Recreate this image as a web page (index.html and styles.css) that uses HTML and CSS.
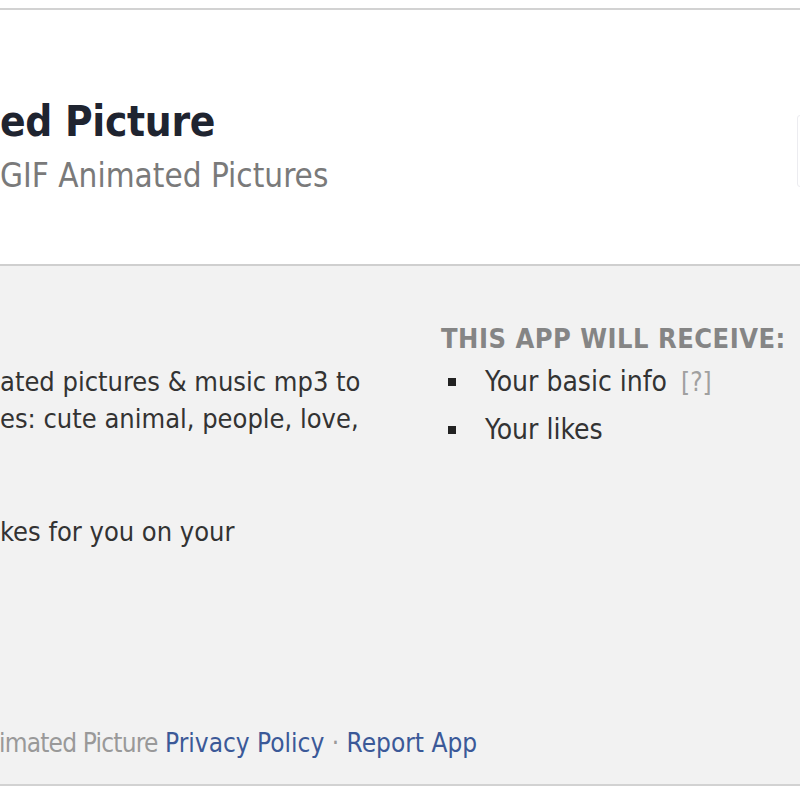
FILE: index.html
```html
<!DOCTYPE html>
<html lang="en">
<head>
<meta charset="utf-8">
<title>GIF Animated Picture</title>
<link rel="stylesheet" href="styles.css">
</head>
<body>
<div class="dialog">
  <header class="head">
    <div class="titles">
      <h1 class="app-name">ed Picture</h1>
      <p class="app-sub">GIF Animated Pictures</p>
    </div>
    <div class="head-btn"></div>
  </header>
  <section class="main">
    <div class="cols">
      <div class="desc">
        <p class="para">ated pictures &amp; music mp3 to<br>es: cute animal, people, love,</p>
        <p class="para para-2">kes for you on your</p>
      </div>
      <div class="perms">
        <h2 class="perms-title">THIS APP WILL RECEIVE:</h2>
        <ul class="perms-list">
          <li>Your basic info <span class="help">[?]</span></li>
          <li>Your likes</li>
        </ul>
      </div>
    </div>
    <footer class="foot">
      <span class="muted">imated Picture</span> <a class="link" href="#">Privacy Policy</a> <span class="dot">·</span> <a class="link" href="#">Report App</a>
    </footer>
  </section>
</div>
</body>
</html>
```
FILE: styles.css
```css
html, body {
  margin: 0;
  padding: 0;
  background: #ffffff;
  overflow: hidden;
}
body {
  font-family: "DejaVu Sans Condensed", "DejaVu Sans", sans-serif;
  color: #333333;
}
.dialog {
  margin-top: 8px;
  border-top: 2px solid #d2d2d2;
  border-bottom: 2px solid #d2d2d2;
}
.head {
  height: 256px;
  background: #ffffff;
  border-bottom: 2px solid #cfcfcf;
  display: flex;
  box-sizing: border-box;
}
.titles {
  flex: 1;
  padding-top: 84px;
}
.app-name {
  margin: 0;
  font-size: 42px;
  line-height: 56px;
  font-weight: bold;
  letter-spacing: -0.3px;
  color: #1f2430;
}
.app-sub {
  margin: 4px 0 0;
  font-size: 33px;
  line-height: 44px;
  color: #7a7a7a;
}
.head-btn {
  width: 20px;
  margin-right: -19px;
  margin-top: 105px;
  height: 70px;
  border: 1px solid #ececf0;
  border-radius: 3px;
}
.main {
  background: #f2f2f2;
  height: 518px;
  display: flex;
  flex-direction: column;
}
.cols {
  display: flex;
  padding-top: 56px;
}
.desc {
  width: 441px;
  font-size: 27px;
  line-height: 37px;
  padding-top: 41px;
}
.para {
  margin: 0;
}
.para-2 {
  margin-top: 76px;
}
.perms {
  flex: 1;
}
.perms-title {
  margin: 0;
  font-size: 27px;
  line-height: 34px;
  font-weight: bold;
  letter-spacing: 0.5px;
  color: #858585;
}
.perms-list {
  list-style: none;
  margin: 2px 0 0;
  padding: 0;
  font-size: 28px;
  line-height: 48px;
}
.perms-list li {
  display: flex;
  align-items: center;
}
.perms-list li::before {
  content: "";
  width: 8px;
  height: 8px;
  background: #222222;
  margin-left: 7px;
  margin-right: 29px;
}
.help {
  color: #a0a0a0;
  margin-left: 14px;
  font-size: 26px;
}
.foot {
  margin-top: auto;
  margin-left: -1px;
  padding-bottom: 24px;
  font-size: 26px;
  line-height: 34px;
  color: #999999;
}
.muted {
  letter-spacing: -0.8px;
}
.link {
  color: #3b5998;
  text-decoration: none;
}
.dot {
  color: #999999;
}
```
